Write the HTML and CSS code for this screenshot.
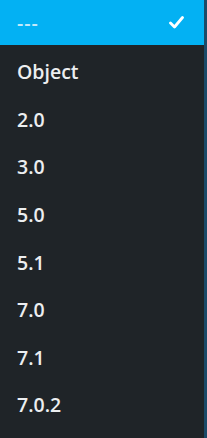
FILE: index.html
```html
<!DOCTYPE html>
<html lang="en">
<head>
  <meta charset="UTF-8">
  <title>Version picker</title>
  <meta name="viewport" content="width=device-width, initial-scale=1.0">
  <link rel="stylesheet" href="styles.css">
</head>
<body>
  <ul class="menu">
    <li class="item selected">
      <span class="label">---</span>
      <svg class="check" width="15" height="13" viewBox="0 0 15 13">
        <path d="M1.5 7 L5.5 11 L13.5 1.5" fill="none" stroke="#fff" stroke-width="2.8" stroke-linecap="round" stroke-linejoin="round"/>
      </svg>
    </li>
    <li class="item">Object</li>
    <li class="item">2.0</li>
    <li class="item">3.0</li>
    <li class="item">5.0</li>
    <li class="item">5.1</li>
    <li class="item">7.0</li>
    <li class="item">7.1</li>
    <li class="item">7.0.2</li>
  </ul>
</body>
</html>
```

FILE: styles.css
```css
html, body { margin: 0; padding: 0; background: #1f2428; }

.menu {
  list-style: none;
  margin: 0;
  padding: 0;
  width: 207px;
  height: 438px;
  background: #1f2428;
  border-right: 3px solid #1b4a68;
  box-sizing: border-box;
  font-family: "Open Sans", "Noto Sans", sans-serif;
  font-size: 19.5px;
  font-weight: 600;
  color: #eceef0;
  overflow: hidden;
}

.item {
  display: flex;
  align-items: center;
  height: 47.6px;
  padding-left: 17px;
}

.selected {
  height: 45px;
  margin-bottom: 3px;
  margin-right: -3px;
  padding-right: 23px;
  background: #03b1f3;
  justify-content: space-between;
}

.selected .label { color: #c2e9fb; letter-spacing: 1px; }
.check { display: block; }
```
